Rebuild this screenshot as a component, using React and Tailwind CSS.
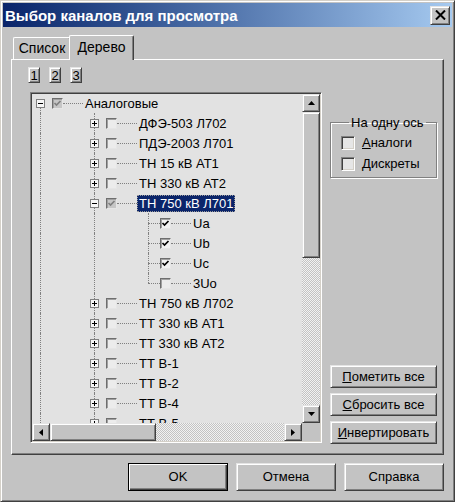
import React from 'react';

const raised =
  'bg-[#c3c3c3] border border-t-[#e4e4e4] border-l-[#e4e4e4] border-r-[#404040] border-b-[#404040] shadow-[inset_1px_1px_#ffffff,inset_-1px_-1px_#808080]';
const sunken =
  'border border-t-[#808080] border-l-[#808080] border-r-white border-b-white shadow-[inset_1px_1px_#404040,inset_-1px_-1px_#d4d0c8]';
const track =
  'bg-[repeating-conic-gradient(#c3c3c3_0_25%,#f2f2f2_0_50%)] bg-[length:2px_2px]';

const rows = [
  { lvl: 0, box: '-', cb: 'grey', text: 'Аналоговые' },
  { lvl: 1, box: '+', cb: 'empty', text: 'ДФЭ-503 Л702' },
  { lvl: 1, box: '+', cb: 'empty', text: 'ПДЭ-2003 Л701' },
  { lvl: 1, box: '+', cb: 'empty', text: 'ТН 15 кВ АТ1' },
  { lvl: 1, box: '+', cb: 'empty', text: 'ТН 330 кВ АТ2' },
  { lvl: 1, box: '-', cb: 'grey', text: 'ТН 750 кВ Л701', sel: true },
  { lvl: 2, cb: 'checked', text: 'Ua' },
  { lvl: 2, cb: 'checked', text: 'Ub' },
  { lvl: 2, cb: 'checked', text: 'Uc' },
  { lvl: 2, cb: 'empty', text: '3Uo', last: true },
  { lvl: 1, box: '+', cb: 'empty', text: 'ТН 750 кВ Л702' },
  { lvl: 1, box: '+', cb: 'empty', text: 'ТТ 330 кВ АТ1' },
  { lvl: 1, box: '+', cb: 'empty', text: 'ТТ 330 кВ АТ2' },
  { lvl: 1, box: '+', cb: 'empty', text: 'ТТ В-1' },
  { lvl: 1, box: '+', cb: 'empty', text: 'ТТ В-2' },
  { lvl: 1, box: '+', cb: 'empty', text: 'ТТ В-4' },
  { lvl: 1, box: '+', cb: 'empty', text: 'ТТ В-5' },
];

function Box({ sign }) {
  return (
    <span className="w-[9px] h-[9px] border border-[#808080] bg-[#f6f6f6] flex items-center justify-center shrink-0">
      <svg width="7" height="7" viewBox="0 0 7 7">
        <path d={sign === '+' ? 'M1 3.5H6M3.5 1V6' : 'M1 3.5H6'} stroke="black" strokeWidth="1" />
      </svg>
    </span>
  );
}

function TreeCheck({ type }) {
  const bg = type === 'grey' ? 'bg-[#c6c6c6]' : type === 'checked' ? 'bg-[#f2f2f2]' : 'bg-[#ececec]';
  return (
    <span
      className={`w-[11px] h-[11px] shrink-0 flex items-center justify-center border border-t-[#6e6e6e] border-l-[#6e6e6e] border-r-[#e6e6e6] border-b-[#e6e6e6] shadow-[inset_1px_1px_#a0a0a0] ${bg}`}
    >
      {type !== 'empty' && (
        <svg width="9" height="9" viewBox="0 0 9 9">
          <path
            d="M1.5 4 L3.5 6 L7.5 2"
            fill="none"
            stroke={type === 'grey' ? '#808080' : '#000000'}
            strokeWidth="1.7"
          />
        </svg>
      )}
    </span>
  );
}

function Row({ r }) {
  const pad = r.lvl === 0 ? 'pl-[4px]' : r.lvl === 1 ? 'pl-[58px]' : 'pl-[116px]';
  return (
    <div className={`relative h-[20px] flex items-center ${pad}`}>
      <span
        className={`absolute left-[8px] border-l border-dotted border-[#808080] ${
          r.lvl === 0 ? 'top-[14px] bottom-0' : 'top-0 bottom-0'
        }`}
      />
      {r.lvl > 0 && (
        <span className="absolute left-[62px] top-0 bottom-0 border-l border-dotted border-[#808080]" />
      )}
      {r.lvl === 2 && (
        <span
          className={`absolute left-[116px] top-0 border-l border-dotted border-[#808080] ${
            r.last ? 'h-[10px]' : 'bottom-0'
          }`}
        />
      )}
      {r.lvl === 2 ? (
        <span className="w-[12px] border-t border-dotted border-[#808080] shrink-0" />
      ) : (
        <>
          <span className="relative z-10">
            <Box sign={r.box} />
          </span>
          <span className="w-[7px] shrink-0" />
        </>
      )}
      <TreeCheck type={r.cb} />
      <span className="w-[20px] border-t border-dotted border-[#808080] shrink-0" />
      <span
        className={`px-[2px] h-[17px] leading-[17px] whitespace-nowrap ${
          r.sel ? 'bg-[#0a246a] text-white outline-1 outline-dotted outline-[#9a9a9a] -outline-offset-1' : ''
        }`}
      >
        {r.text}
      </span>
    </div>
  );
}

function Arrow({ dir }) {
  const d = {
    up: 'M3.5 0L7 4H0z',
    down: 'M0 0H7L3.5 4z',
  };
  if (dir === 'left' || dir === 'right')
    return (
      <svg width="4" height="7" viewBox="0 0 4 7">
        <path d={dir === 'left' ? 'M4 0V7L0 3.5z' : 'M0 0L4 3.5L0 7z'} fill="black" />
      </svg>
    );
  return (
    <svg width="7" height="4" viewBox="0 0 7 4">
      <path d={d[dir]} fill="black" />
    </svg>
  );
}

function SideCheck({ label }) {
  return (
    <div className="h-[21px] flex items-center">
      <span className={`w-[14px] h-[14px] bg-[#e6e6e6] ${sunken}`} />
      <span className="ml-[7px]">
        <span className="underline">{label[0]}</span>
        {label.slice(1)}
      </span>
    </div>
  );
}

function SideButton({ label }) {
  return (
    <button className={`h-[23px] w-full flex items-center justify-center ${raised}`}>
      <span>
        <span className="underline">{label[0]}</span>
        {label.slice(1)}
      </span>
    </button>
  );
}

export default function App() {
  return (
    <div className="w-[455px] h-[502px] bg-[#c3c3c3] text-black text-[13px] font-['Liberation_Sans',Arial,sans-serif] border border-t-[#d4d0c8] border-l-[#d4d0c8] border-r-[#404040] border-b-[#404040] shadow-[inset_1px_1px_#ffffff,inset_-1px_-1px_#808080] p-[2px] flex flex-col">
      {/* title bar */}
      <div className="h-[24px] shrink-0 flex items-center justify-between pl-[2px] pr-[2px] bg-linear-to-r from-[#0a246a] to-[#a6caf0]">
        <span className="text-white font-bold text-[15px] leading-none">Выбор каналов для просмотра</span>
        <button className={`w-[20px] h-[19px] flex items-center justify-center ${raised}`}>
          <svg width="11" height="10" viewBox="0 0 11 10">
            <path d="M1 0.5L10 9.5M10 0.5L1 9.5" stroke="black" strokeWidth="2" />
          </svg>
        </button>
      </div>

      {/* tabs */}
      <div className="mt-[8px] h-[24px] flex items-end ml-[10px] text-[14px]">
        <div className="h-[22px] w-[58px] flex items-center justify-center border-t border-l border-white border-r border-r-[#404040] shadow-[inset_-1px_0_#808080] rounded-tl-[2px] rounded-tr-[2px]">
          Список
        </div>
        <div className="relative z-10 -ml-[2px] -mb-[1px] h-[25px] w-[65px] bg-[#c3c3c3] flex items-center justify-center pb-[2px] border-t border-l border-white border-r border-r-[#404040] shadow-[inset_-1px_0_#808080] rounded-tl-[2px] rounded-tr-[2px]">
          Дерево
        </div>
      </div>

      {/* panel */}
      <div className="mx-[8px] h-[396px] shrink-0 border border-white border-r-[#404040] border-b-[#404040] shadow-[inset_-1px_-1px_#808080] flex pt-[7px] pl-[16px]">
        <div className="flex flex-col">
          <div className="flex gap-[9px] h-[16px]">
            {['1', '2', '3'].map((n) => (
              <button key={n} className={`w-[12px] h-[16px] flex items-center justify-center leading-none ${raised}`}>
                {n}
              </button>
            ))}
          </div>
          <div className={`ml-[2px] mt-[9px] w-[292px] h-[351px] p-[1px] flex flex-col ${sunken}`}>
            <div className="flex-1 flex min-h-0">
              <div className="flex-1 bg-[#e2e2e2] overflow-hidden">
                <div className="-mt-[1px]">
                  {rows.map((r, i) => (
                    <Row key={i} r={r} />
                  ))}
                </div>
              </div>
              <div className="w-[18px] flex flex-col">
                <div className={`h-[18px] flex items-center justify-center ${raised}`}>
                  <Arrow dir="up" />
                </div>
                <div className={`h-[146px] ${raised}`} />
                <div className={`flex-1 ${track}`} />
                <div className={`h-[18px] flex items-center justify-center ${raised}`}>
                  <Arrow dir="down" />
                </div>
              </div>
            </div>
            <div className="h-[18px] flex">
              <div className={`w-[18px] flex items-center justify-center ${raised}`}>
                <Arrow dir="left" />
              </div>
              <div className={`w-[106px] ${raised}`} />
              <div className={`flex-1 ${track}`} />
              <div className={`w-[18px] flex items-center justify-center ${raised}`}>
                <Arrow dir="right" />
              </div>
              <div className="w-[18px] bg-[#c3c3c3]" />
            </div>
          </div>
        </div>

        <div className="ml-[8px] w-[107px] h-[377px] flex flex-col">
          <fieldset className="mt-[48px] border border-[#808080] shadow-[inset_1px_1px_#ffffff,1px_1px_#ffffff] pl-[10px] pt-[2px] pb-[3px]">
            <legend className="ml-[8px] px-[2px] leading-[15px]">На одну ось</legend>
            <SideCheck label="Аналоги" />
            <SideCheck label="Дискреты" />
          </fieldset>
          <div className="mt-auto flex flex-col gap-[5px]">
            <SideButton label="Пометить все" />
            <SideButton label="Сбросить все" />
            <SideButton label="Инвертировать" />
          </div>
        </div>
      </div>

      {/* bottom buttons */}
      <div className="mt-[8px] flex justify-end gap-[8px] pr-[8px]">
        <button className="w-[100px] h-[28px] bg-[#c3c3c3] border border-black shadow-[inset_1px_1px_#ffffff,inset_-1px_-1px_#404040,inset_-2px_-2px_#808080] flex items-center justify-center">
          OK
        </button>
        <button className={`w-[100px] h-[28px] flex items-center justify-center ${raised}`}>Отмена</button>
        <button className={`w-[100px] h-[28px] flex items-center justify-center ${raised}`}>Справка</button>
      </div>
    </div>
  );
}
